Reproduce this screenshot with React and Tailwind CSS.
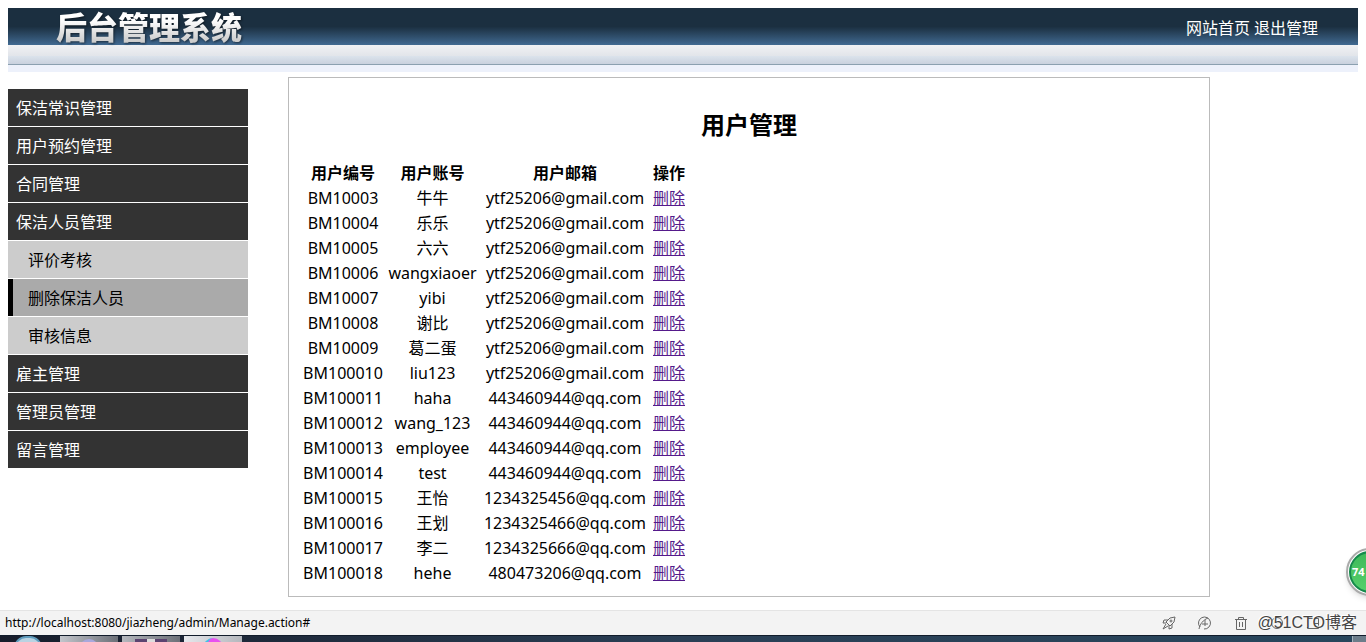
import React from "react";

const menu = [
  { name: "保洁常识管理" },
  { name: "用户预约管理" },
  { name: "合同管理" },
  {
    name: "保洁人员管理",
    children: [
      { name: "评价考核" },
      { name: "删除保洁人员", active: true },
      { name: "审核信息" },
    ],
  },
  { name: "雇主管理" },
  { name: "管理员管理" },
  { name: "留言管理" },
];

const users = [
  ["BM10003", "牛牛", "ytf25206@gmail.com"],
  ["BM10004", "乐乐", "ytf25206@gmail.com"],
  ["BM10005", "六六", "ytf25206@gmail.com"],
  ["BM10006", "wangxiaoer", "ytf25206@gmail.com"],
  ["BM10007", "yibi", "ytf25206@gmail.com"],
  ["BM10008", "谢比", "ytf25206@gmail.com"],
  ["BM10009", "葛二蛋", "ytf25206@gmail.com"],
  ["BM100010", "liu123", "ytf25206@gmail.com"],
  ["BM100011", "haha", "443460944@qq.com"],
  ["BM100012", "wang_123", "443460944@qq.com"],
  ["BM100013", "employee", "443460944@qq.com"],
  ["BM100014", "test", "443460944@qq.com"],
  ["BM100015", "王怡", "1234325456@qq.com"],
  ["BM100016", "王划", "1234325466@qq.com"],
  ["BM100017", "李二", "1234325666@qq.com"],
  ["BM100018", "hehe", "480473206@qq.com"],
];

const Header = () => (
  <header className="mx-2">
    <div className="flex h-[37px] items-center justify-between bg-linear-to-b from-[#1b2f40] from-50% to-[#416a92] pl-12 pr-10">
      <h1 className="bg-linear-to-b from-white from-30% to-[#c4c4c4] bg-clip-text text-[31px] leading-9 font-black text-transparent drop-shadow-[1px_1px_1px_rgba(0,0,0,0.5)]">
        后台管理系统
      </h1>
      <nav className="flex gap-1 pt-[2px] text-white">
        <a href="#">网站首页</a>
        <a href="#">退出管理</a>
      </nav>
    </div>
    <div className="h-[11px] bg-linear-to-b from-[#f0f1f4] to-[#e2e5ea]" />
    <div className="h-2 bg-linear-to-b from-[#dbe3ec] to-[#c9d1de]" />
    <div className="h-2 border-t border-[#8ba0b0] bg-[#edf1fb]" />
  </header>
);

const Sidebar = () => (
  <aside className="mt-[17px] w-60 shrink-0">
    <ul>
      {menu.map((item) => (
        <li key={item.name}>
          <a href="#" className="mb-px block h-[37px] bg-[#333] pl-2 leading-[39px] text-white">
            {item.name}
          </a>
          {item.children && (
            <ul>
              {item.children.map((child) => (
                <li key={child.name}>
                  <a
                    href="#"
                    className={`mb-px block h-[37px] leading-[39px] text-black ${
                      child.active
                        ? "border-l-5 border-black bg-[#aaa] pl-[15px]"
                        : "bg-[#ccc] pl-5"
                    }`}
                  >
                    {child.name}
                  </a>
                </li>
              ))}
            </ul>
          )}
        </li>
      ))}
    </ul>
  </aside>
);

const UserTable = () => (
  <main className="mt-[5px] mr-[148px] ml-10 flex-1 border border-[#bbb] px-[10px] pt-[10px] pb-[9px]">
    <h2 className="mt-[21px] mb-[19px] text-center text-2xl font-bold">用户管理</h2>
    <table className="border-separate border-spacing-[2px] text-center leading-[21px]">
      <thead>
        <tr>
          <th className="w-[84px] p-px">用户编号</th>
          <th className="w-[91px] p-px">用户账号</th>
          <th className="w-[170px] p-px">用户邮箱</th>
          <th className="w-[34px] p-px">操作</th>
        </tr>
      </thead>
      <tbody>
        {users.map(([id, account, email]) => (
          <tr key={id}>
            <td className="p-px">{id}</td>
            <td className="p-px">{account}</td>
            <td className="p-px">{email}</td>
            <td className="p-px">
              <a href="#" className="text-[#551a8b] underline">
                删除
              </a>
            </td>
          </tr>
        ))}
      </tbody>
    </table>
  </main>
);

const StatusBar = () => (
  <div className="relative flex h-[25px] items-center justify-between border-t border-[#e4e4e4] bg-[#f3f3f3] px-[5px]">
    <span className="text-xs leading-5 text-black">
      http://localhost:8080/jiazheng/admin/Manage.action#
    </span>
    <div className="flex items-center gap-[22px] pr-[41px] text-[#666]">
      {/* rocket */}
      <svg className="size-[14px]" viewBox="0 0 14 14" fill="none" stroke="currentColor">
        <path d="M13 1L8 2L4 6L8 10L12 6ZM6 4H2L1 7L4 7M10 8V12L7 13L7 9M4 8L1 13L6 10" />
        <circle cx="9" cy="5" r="1" />
      </svg>
      {/* speed */}
      <svg className="size-[14px]" viewBox="0 0 14 14" fill="none" stroke="currentColor">
        <path d="M2 11A6 6 0 1 1 6 13M1 13C2 8 5 4 10 2M7 4V10M4 8H10" />
      </svg>
      {/* trash */}
      <svg className="size-[14px]" viewBox="0 0 14 14" fill="none" stroke="currentColor">
        <path d="M1 3.5H13M4.5 3V1.5H9.5V3M2.5 4V13.5H11.5V4M5.5 6V11M8.5 6V11" />
      </svg>
      {/* sound */}
      <svg className="size-[14px]" viewBox="0 0 14 14" fill="none" stroke="currentColor">
        <circle cx="7" cy="7" r="5.5" />
      </svg>
      {/* window */}
      <svg className="size-[14px]" viewBox="0 0 14 14" fill="none" stroke="currentColor">
        <path d="M1.5 2.5H12.5V12.5H1.5ZM7 7.5H12" />
      </svg>
    </div>
    <span className="absolute top-0 right-[9px] font-['Liberation_Sans','Noto_Sans_CJK_SC',sans-serif] text-base text-[#444] [text-shadow:-1px_-1px_0_#fff]">
      @51CTO博客
    </span>
  </div>
);

const Taskbar = () => (
  <div className="flex h-[7px] overflow-hidden border-t border-[#111c2b] bg-linear-to-r from-[#171d2b] via-[#2a3f55] to-[#28465c]">
    <div className="ml-[14px] h-6 w-7 shrink-0 rounded-full border-2 border-[#5f9cbd] bg-[#b9d3e2]" />
    <div className="ml-[18px] flex h-3 w-[58px] justify-center bg-linear-to-r from-[#c3c6cc] to-[#6c7078] pt-[3px]">
      <div className="size-5 shrink-0 rounded-full bg-[#a9a8dc]" />
    </div>
    <div className="ml-1 flex h-3 w-[58px] justify-center bg-linear-to-r from-[#b5b8be] to-[#6c7078] pt-[3px]">
      <div className="h-5 w-8 border-x-[12px] border-[#5b4370] bg-[#ddd]" />
    </div>
    <div className="ml-1 flex h-3 w-[58px] justify-center bg-linear-to-r from-[#e6e8ec] to-[#b4b7bd] pt-[2px]">
      <div className="size-5 shrink-0 rounded-full border-l-4 border-[#44c3e6] bg-[#e850f0]" />
    </div>
    <div className="ml-auto h-3 w-[14px] border-l border-[#a4b2bd] bg-[#6c7d8a]" />
  </div>
);

const App = () => {
  return (
    <div className="relative overflow-hidden bg-white pt-2 font-['Noto_Sans','Noto_Sans_CJK_SC',sans-serif] text-base text-black">
      <Header />
      <div className="mx-2 flex items-start">
        <Sidebar />
        <UserTable />
      </div>
      <div className="absolute right-[-28px] bottom-[46px] size-[48px] rounded-full border-2 border-[#aaa] bg-white p-px shadow-md">
        <div className="flex h-full items-center rounded-full border-2 border-[#168a4c] bg-linear-to-b from-[#3fb95a] to-[#55d06b] pl-px text-[11px] font-bold text-white">
          74
        </div>
      </div>
      <footer className="mt-[13px]">
        <StatusBar />
        <Taskbar />
      </footer>
    </div>
  );
};

export default App;
